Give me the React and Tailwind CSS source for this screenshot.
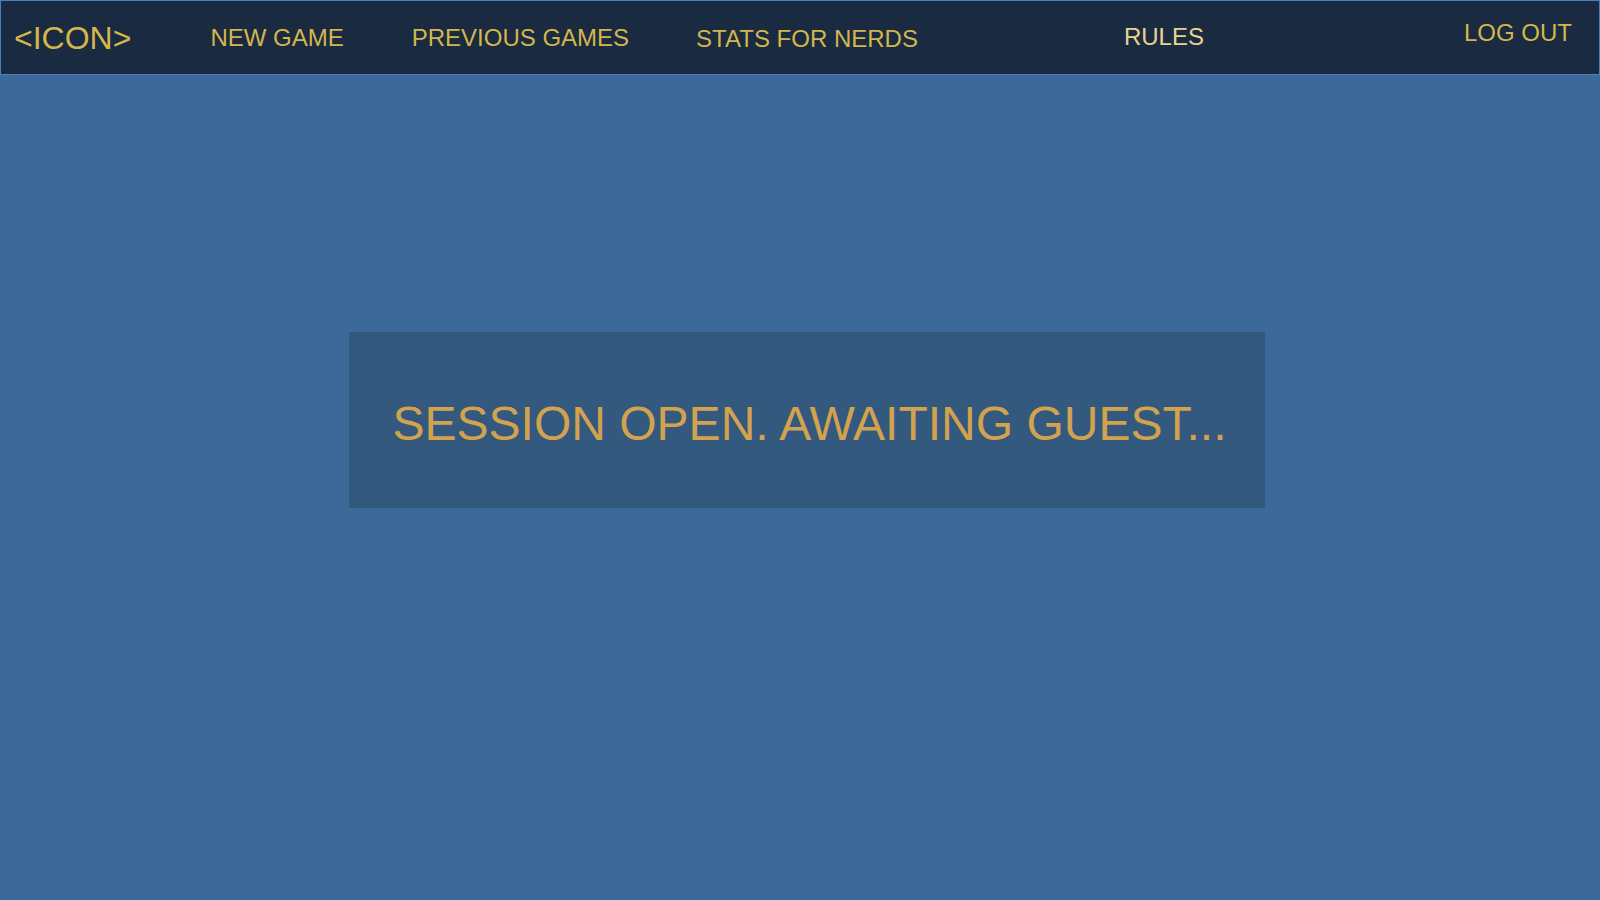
export default function App() {
    return (
        <div
            className="min-h-screen flex flex-col bg-[#3c6999]"
            style={{ fontFamily: '"Liberation Sans", Arial, sans-serif' }}
        >
            <header className="h-[75px] flex items-center bg-[#1a2a41] border border-[#4a80c0] text-[#d3b64c]">
                <div className="ml-[13px] text-[32px] leading-none">&lt;ICON&gt;</div>
                <nav className="flex items-center text-[24px] leading-none">
                    <a className="ml-[79px] mt-[1px]">NEW GAME</a>
                    <a className="ml-[68px] mt-[1px]">PREVIOUS GAMES</a>
                    <a className="ml-[67px] mt-[3px]">STATS FOR NERDS</a>
                    <a className="ml-[206px] mb-[1px] text-[#ead390]">RULES</a>
                </nav>
                <a className="ml-auto mr-[27px] text-[24px] leading-none mb-[10px]">LOG OUT</a>
            </header>
            <main className="flex-1 flex justify-center pt-[257px]">
                <div className="ml-[14px] w-[916px] h-[176px] bg-[#33597e] flex items-center justify-center pl-[5px]">
                    <h1 className="text-[48px] leading-none text-[#d2a24f] mt-[7px]">
                        SESSION OPEN. AWAITING GUEST...
                    </h1>
                </div>
            </main>
        </div>
    );
}
